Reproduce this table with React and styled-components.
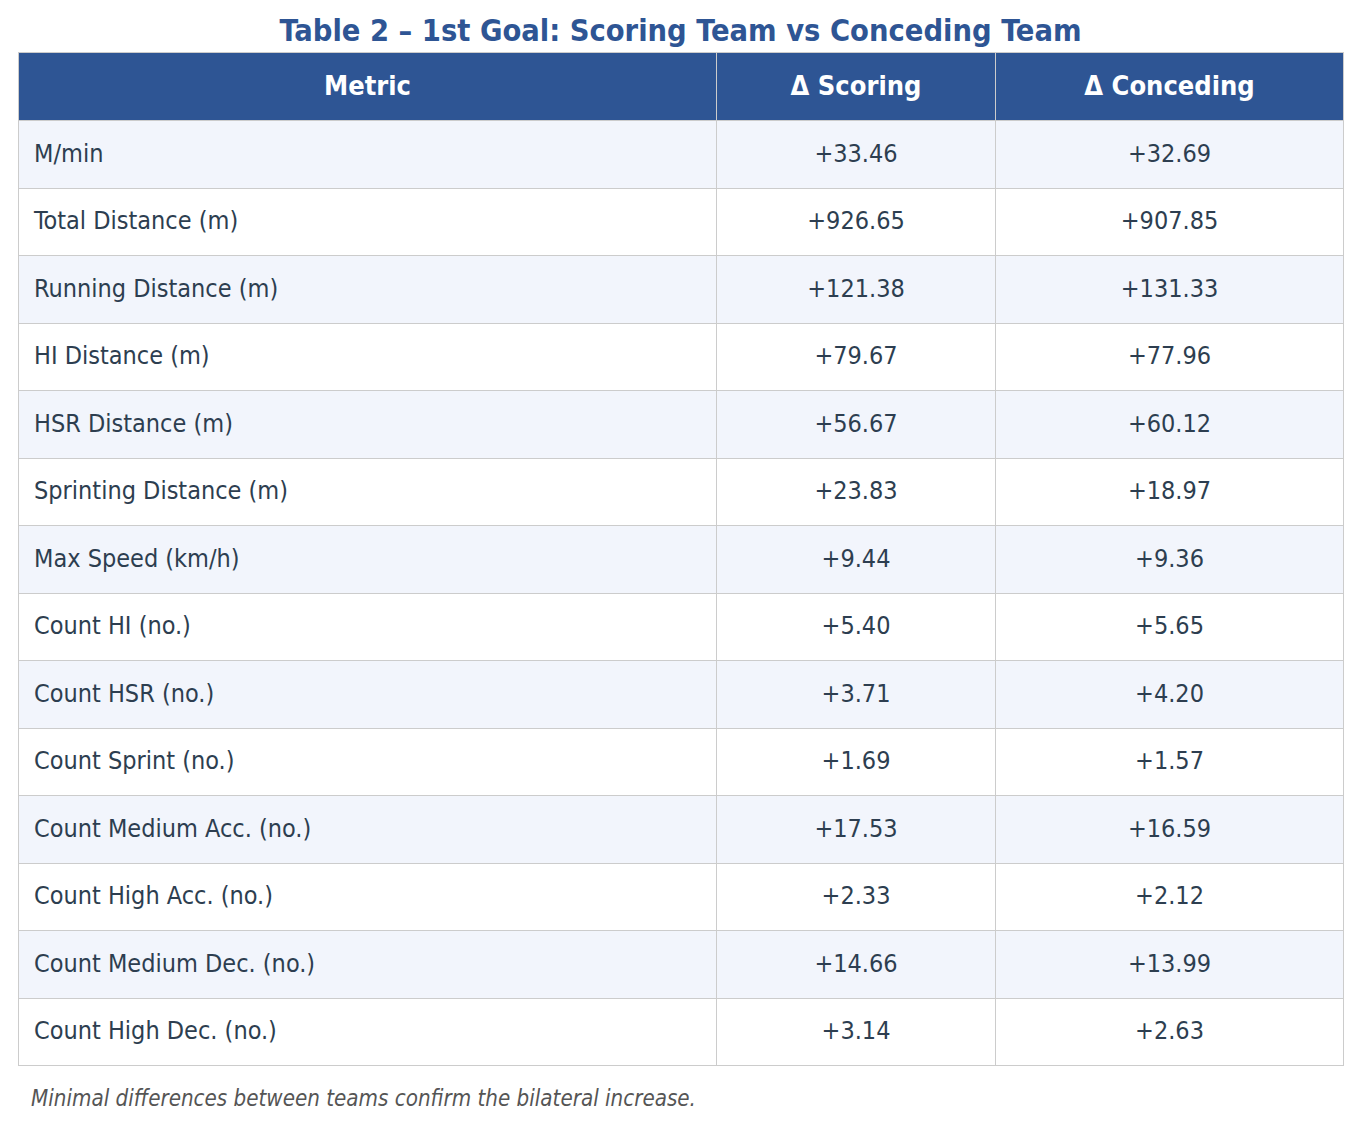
import styled, { createGlobalStyle } from "styled-components";

const GlobalStyle = createGlobalStyle`
  body {
    margin: 0;
    background: #fff;
    font-family: "DejaVu Sans Condensed", "DejaVu Sans", sans-serif;
  }
`;

const Page = styled.div`
  padding: 0 18px;
`;

const Title = styled.h1`
  margin: 0;
  height: 52px;
  line-height: 62px;
  text-align: center;
  font-size: 30.5px;
  font-weight: 700;
  color: #2e5594;
`;

const Table = styled.table`
  width: 100%;
  border-collapse: collapse;
  table-layout: fixed;
  border: 1px solid #cccccc;
`;

const Head = styled.th`
  height: 65px;
  padding: 0 0 2px;
  background: #2e5594;
  color: #fff;
  font-size: 27px;
  font-weight: 700;
  text-align: center;
  border: 1px solid #cccccc;
  border-top: none;
`;

const Row = styled.tr`
  height: 67.5px;
  background: ${(props) => (props.alt ? "#f2f5fc" : "#ffffff")};
`;

const Cell = styled.td`
  padding: 0 ${(props) => (props.metric ? "15px" : "0")} 2px;
  text-align: ${(props) => (props.metric ? "left" : "center")};
  font-size: 25px;
  color: #2d3e50;
  border: 1px solid #cccccc;
`;

const Caption = styled.p`
  margin: 19px 0 0 13px;
  font-size: 22.2px;
  font-style: italic;
  color: #555555;
`;

const rows = [
  ["M/min", "+33.46", "+32.69"],
  ["Total Distance (m)", "+926.65", "+907.85"],
  ["Running Distance (m)", "+121.38", "+131.33"],
  ["HI Distance (m)", "+79.67", "+77.96"],
  ["HSR Distance (m)", "+56.67", "+60.12"],
  ["Sprinting Distance (m)", "+23.83", "+18.97"],
  ["Max Speed (km/h)", "+9.44", "+9.36"],
  ["Count HI (no.)", "+5.40", "+5.65"],
  ["Count HSR (no.)", "+3.71", "+4.20"],
  ["Count Sprint (no.)", "+1.69", "+1.57"],
  ["Count Medium Acc. (no.)", "+17.53", "+16.59"],
  ["Count High Acc. (no.)", "+2.33", "+2.12"],
  ["Count Medium Dec. (no.)", "+14.66", "+13.99"],
  ["Count High Dec. (no.)", "+3.14", "+2.63"],
];

export default function App() {
  return (
    <Page>
      <GlobalStyle />
      <Title>Table 2 – 1st Goal: Scoring Team vs Conceding Team</Title>
      <Table>
        <colgroup>
          <col style={{ width: "698px" }} />
          <col style={{ width: "279px" }} />
          <col style={{ width: "348px" }} />
        </colgroup>
        <thead>
          <tr>
            <Head>Metric</Head>
            <Head>Δ Scoring</Head>
            <Head>Δ Conceding</Head>
          </tr>
        </thead>
        <tbody>
          {rows.map(([metric, scoring, conceding], i) => (
            <Row key={metric} alt={i % 2 === 0}>
              <Cell metric>{metric}</Cell>
              <Cell>{scoring}</Cell>
              <Cell>{conceding}</Cell>
            </Row>
          ))}
        </tbody>
      </Table>
      <Caption>Minimal differences between teams confirm the bilateral increase.</Caption>
    </Page>
  );
}
